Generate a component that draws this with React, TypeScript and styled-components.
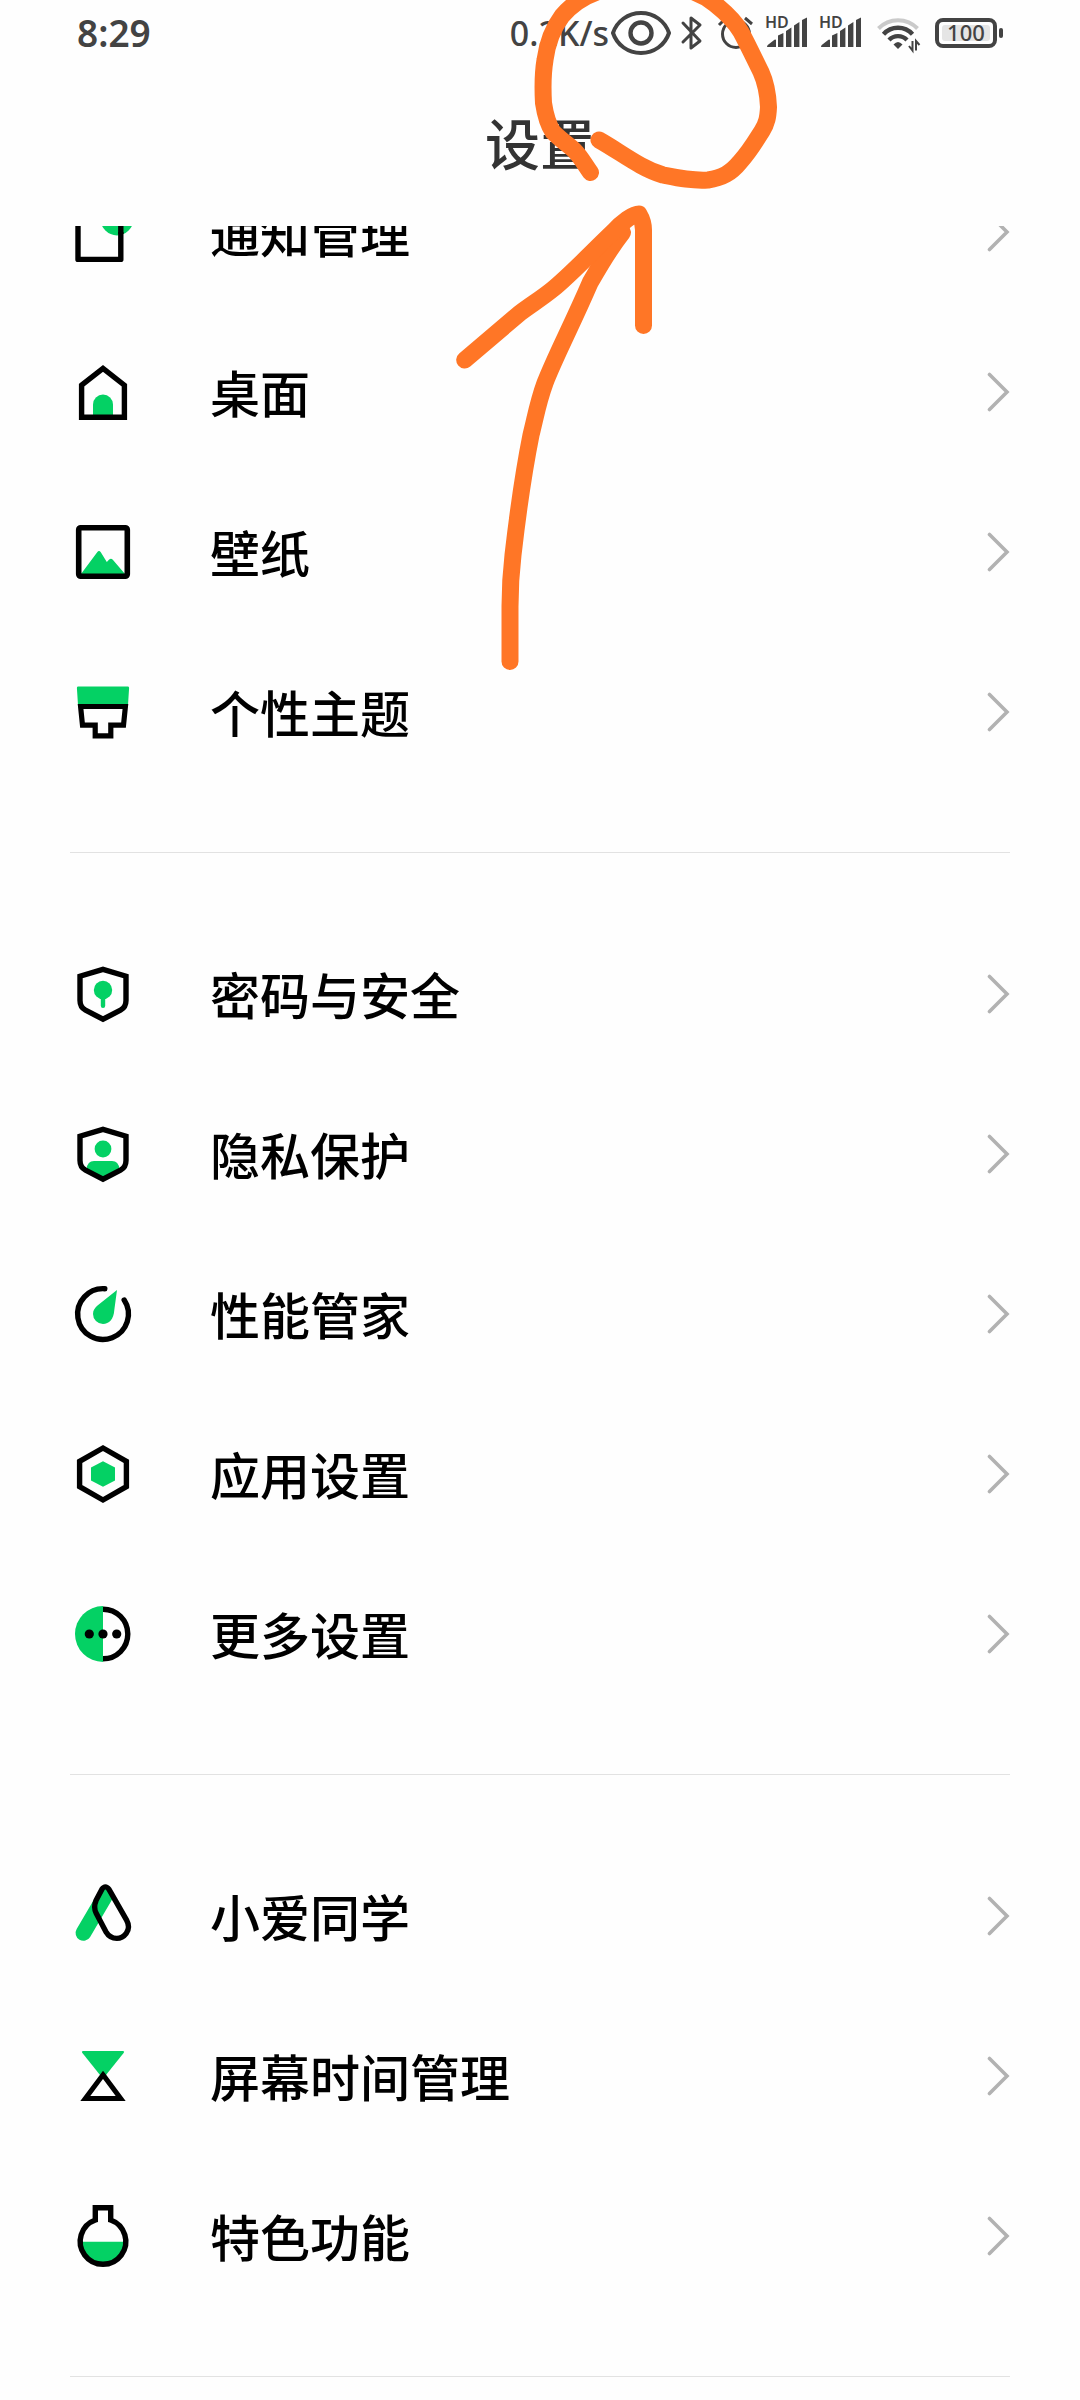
import React from "react";
import styled, { createGlobalStyle } from "styled-components";

const GREEN = "#04d164";
const INK = "#434343";

const GlobalStyle = createGlobalStyle`
  *, *::before, *::after { box-sizing: border-box; }
  body {
    margin: 0;
    background: #fefefe;
    font-family: "Noto Sans", "Noto Sans CJK SC", sans-serif;
  }
`;

const Screen = styled.div`
  position: relative;
  display: flex;
  flex-direction: column;
  min-height: 100vh;
  overflow: hidden;
`;

const StatusBar = styled.header`
  display: flex;
  align-items: center;
  justify-content: space-between;
  height: 66px;
  padding: 0 77px;
  color: ${INK};
`;

const Clock = styled.time`
  font-size: 37px;
  font-weight: 600;
  line-height: 48px;
`;

const StatusGroup = styled.div<{ $gap: number }>`
  display: flex;
  align-items: center;
  gap: ${(p) => p.$gap}px;
`;

const Speed = styled.span`
  font-size: 34px;
  font-weight: 500;
  line-height: 48px;
`;

const StatusGlyph = styled.svg`
  display: block;
  flex: none;
  height: 60px;
  fill: none;
  stroke: ${INK};
`;

const TitleBar = styled.div`
  display: flex;
  align-items: center;
  justify-content: center;
  height: 160px;
  padding-bottom: 10px;
`;

const Title = styled.h1`
  margin: 0;
  color: #333;
  font-family: "Noto Sans CJK SC", sans-serif;
  font-size: 55px;
  font-weight: 500;
  line-height: 80px;
`;

const Viewport = styled.main`
  flex: 1;
  overflow: hidden;
`;

/* The list is scrolled so that its first row is partly under the title bar. */
const Scrolled = styled.nav`
  margin: -74px 70px 0;
`;

const Group = styled.ul`
  margin: 0;
  padding: 0 0 60px;
  list-style: none;
  border-bottom: 1px solid #e2e2e2;

  & + & {
    padding-top: 61px;
  }
`;

const Row = styled.a`
  display: flex;
  align-items: center;
  height: 160px;
  color: #000;
  text-decoration: none;
`;

const RowIcon = styled.svg`
  display: block;
  flex: none;
  width: 66px;
  height: 66px;
  margin-right: 74px;
  fill: none;
  stroke-width: 5.4;
`;

const Label = styled.span`
  flex: 1;
  padding-bottom: 2px;
  font-family: "Noto Sans CJK SC", sans-serif;
  font-size: 50px;
  font-weight: 500;
  line-height: 72px;
`;

const Chevron = styled.svg`
  display: block;
  flex: none;
  width: 24px;
  height: 40px;
  fill: none;
  stroke: #b2b2b2;
  stroke-width: 3.6;
  stroke-linecap: round;
`;

const Annotation = styled.svg`
  position: absolute;
  top: 0;
  left: 50%;
  width: 400px;
  height: 700px;
  margin-left: -100px;
  overflow: visible;
  pointer-events: none;
  fill: none;
  stroke: #ff7626;
  stroke-width: 17;
  stroke-linecap: round;
  stroke-linejoin: round;
`;

const shield =
  "M0 -24.6L23 -17.8V6.5C23 11.5 21.5 14 17.5 16.2L0 25.2L-17.5 16.2C-21.5 14 -23 11.5 -23 6.5V-17.8Z";

const icons: Record<string, React.ReactNode> = {
  notifications: (
    <>
      <circle cx="14" cy="-13" r="16.4" fill={GREEN} />
      <path d="M-2 -21H-25V27.4H17.8V0" stroke="#000" strokeLinejoin="round" />
      <path d="M17.8 2V-10" stroke="#000" />
    </>
  ),
  home: (
    <>
      <path d="M-10 24V12.5A10 10 0 0 1 10 12.5V24Z" fill={GREEN} />
      <path d="M-21.4 -6.8L0 -23.6L21.4 -6.8V25.3H-21.4Z" stroke="#000" />
    </>
  ),
  wallpaper: (
    <>
      <path d="M-22 22L-5.8 0.2Q-4 -2.2 -2.2 0.2L3.8 9.9L6.2 7.6Q8 6 9.8 7.8L22 22Z" fill={GREEN} />
      <rect x="-24.3" y="-24.3" width="48.6" height="48.6" rx="2" stroke="#000" strokeWidth="5.6" />
    </>
  ),
  theme: (
    <>
      <path d="M-24.6 -25.4H24.6Q26.2 -25.4 26.1 -24L25 -7H-25L-26.1 -24Q-26.2 -25.4 -24.6 -25.4Z" fill={GREEN} />
      <path d="M-22.4 -5.5H22.4L20.5 13.2H7.8V23.8H-7.8V13.2H-20.5Z" stroke="#000" strokeWidth="5.2" />
    </>
  ),
  security: (
    <>
      <circle cy="-4" r="9.2" fill={GREEN} />
      <path d="M0 0V11.8" stroke={GREEN} strokeWidth="4.4" strokeLinecap="round" />
      <path d={shield} stroke="#000" />
    </>
  ),
  privacy: (
    <>
      <circle cy="-5" r="8.4" fill={GREEN} />
      <path d="M-9 7H9Q15.6 7 16.4 15L0 24L-16.4 15Q-15.6 7 -9 7Z" fill={GREEN} />
      <path d={shield} stroke="#000" />
    </>
  ),
  performance: (
    <>
      <path d="M14 -24L11.3 -4C10.8 5 6 10 0 10A10 10 0 0 1 -10 0C-10 -4 -8 -6 -5.5 -8.5Z" fill={GREEN} />
      <path d="M1.8 -25.3A25.4 25.4 0 1 0 21.2 -14" stroke="#000" strokeLinecap="round" />
    </>
  ),
  apps: (
    <>
      <path d="M0 -12.8L12 -6.4V6.4L0 12.8L-12 6.4V-6.4Z" fill={GREEN} />
      <path d="M0 -26L23.4 -12.6V12.6L0 26L-23.4 12.6V-12.6Z" stroke="#000" />
    </>
  ),
  more: (
    <>
      <path d="M0 -28A28 28 0 0 0 0 28Z" fill={GREEN} />
      <path d="M0 -24.8A24.8 24.8 0 0 1 0 24.8" stroke="#000" />
      <circle cx="-13.7" r="4.6" fill="#000" />
      <circle r="4.6" fill="#000" />
      <circle cx="13.7" r="4.6" fill="#000" />
    </>
  ),
  assistant: (
    <>
      <path d="M-19.6 17L2.4 -20.5" stroke={GREEN} strokeWidth="15.6" strokeLinecap="round" />
      <path
        d="M-1.2 -26.6Q2.4 -31.6 6 -26.6L23.6 4.2C29.5 15 20 22.4 13.8 22.4C8.6 22.4 5.2 19.6 2.8 15.6L-6.8 -2.8Q-9.8 -8.6 -7 -15.4Z"
        stroke="#000"
        strokeLinejoin="round"
      />
    </>
  ),
  screenTime: (
    <>
      <path d="M-19.6 -25H19.6Q22 -25 20.6 -23L3 -1H-3L-20.6 -23Q-22 -25 -19.6 -25Z" fill={GREEN} />
      <path d="M0 -1.2L17.7 22.4H-17.7Z" stroke="#000" strokeWidth="5" fill="#fefefe" />
    </>
  ),
  special: (
    <>
      <path d="M-21 5.7H21A21 21 0 0 1 -21 5.7Z" fill={GREEN} />
      <path d="M-7.7 -16V-28.3H7.7V-16A22.8 22.8 0 1 1 -7.7 -16Z" stroke="#000" />
    </>
  ),
};

const groups = [
  [
    { icon: "notifications", label: "通知管理" },
    { icon: "home", label: "桌面" },
    { icon: "wallpaper", label: "壁纸" },
    { icon: "theme", label: "个性主题" },
  ],
  [
    { icon: "security", label: "密码与安全" },
    { icon: "privacy", label: "隐私保护" },
    { icon: "performance", label: "性能管家" },
    { icon: "apps", label: "应用设置" },
    { icon: "more", label: "更多设置" },
  ],
  [
    { icon: "assistant", label: "小爱同学" },
    { icon: "screenTime", label: "屏幕时间管理" },
    { icon: "special", label: "特色功能" },
  ],
];

function Signal() {
  return (
    <StatusGlyph width="42" viewBox="0 0 42 60" aria-label="HD" role="img">
      <text x="0" y="25" fontSize="16" fontWeight="600" fill={INK} stroke="none">
        HD
      </text>
      <path
        d="M2 44Q2 42 4 41L9.5 36.8Q11 36 11 37.5V44ZM13 32.5L18.4 30V44H13ZM21 28L26.4 24.6V44H21ZM29 22.5L34.4 19V44H29ZM37 17L42 14.4V44H37Z"
        fill={INK}
        stroke="none"
      />
    </StatusGlyph>
  );
}

function StatusIcons() {
  return (
    <StatusGroup $gap={12}>
      <StatusGroup $gap={0}>
        <Speed>0.2K/s</Speed>
        <StatusGlyph width="62" viewBox="-31 -30 62 60" strokeWidth="4">
          <path d="M-27 0C-23 -12 -12 -20 1 -20C14 -20 25 -12 29 0C25 12 14 20 1 20C-12 20 -23 12 -27 0Z" />
          <circle cx="1" r="10.5" strokeWidth="4.4" />
        </StatusGlyph>
        <StatusGlyph width="34" viewBox="0 0 34 60" strokeWidth="3">
          <path d="M12 20L29 38L20 45V15L29 22L12 39" strokeLinecap="round" strokeLinejoin="round" />
        </StatusGlyph>
      </StatusGroup>
      <StatusGlyph width="36" viewBox="0 0 36 60" strokeWidth="3">
        <circle cx="19" cy="31" r="13.5" />
        <path d="M19 23V31H24M2 22L9 15M28 15L35 21" />
      </StatusGlyph>
      <Signal />
      <Signal />
      <StatusGlyph width="50" viewBox="0 0 50 60" strokeWidth="4">
        <path d="M5.5 25.5A27 27 0 0 1 44.5 25.5" stroke="#cacaca" />
        <path d="M10.5 31.2A19.5 19.5 0 0 1 39.5 31.2M16 37A12.5 12.5 0 0 1 34 37" strokeWidth="4.4" />
        <path d="M25 46L20.5 41.5Q25 36.5 29.5 41.5Z" fill={INK} stroke="none" />
        <path d="M39.5 38V47.5L36 43M43 47.5V38L46.5 42" strokeWidth="2" />
      </StatusGlyph>
      <StatusGlyph width="68" viewBox="0 0 68 60">
        <rect x="2" y="17" width="58" height="26" rx="6" strokeWidth="4" />
        <rect x="7" y="22" width="48" height="16" rx="3" fill="#e5e5e5" stroke="none" />
        <rect x="64" y="25" width="4" height="10" rx="2" fill={INK} stroke="none" />
        <text x="31" y="38" textAnchor="middle" fontSize="22" fontWeight="500" fill={INK} stroke="none">
          100
        </text>
      </StatusGlyph>
    </StatusGroup>
  );
}

export default function App() {
  return (
    <Screen>
      <GlobalStyle />
      <StatusBar>
        <Clock>8:29</Clock>
        <StatusIcons />
      </StatusBar>
      <TitleBar>
        <Title>设置</Title>
      </TitleBar>
      <Viewport>
        <Scrolled>
          {groups.map((rows, i) => (
            <Group key={i}>
              {rows.map((row) => (
                <li key={row.icon}>
                  <Row href={`#${row.icon}`}>
                    <RowIcon viewBox="-33 -33 66 66" aria-hidden="true">
                      {icons[row.icon]}
                    </RowIcon>
                    <Label>{row.label}</Label>
                    <Chevron viewBox="0 0 24 40" aria-hidden="true">
                      <path d="M3.5 2.5L21 20L3.5 37.5" />
                    </Chevron>
                  </Row>
                </li>
              ))}
            </Group>
          ))}
        </Scrolled>
      </Viewport>
      <Annotation viewBox="440 0 400 700" aria-hidden="true">
        <path d="M590.5 172.5C585 165 581 157 574 150C567 144 560 139 553 132C547 123 545 113 543.5 103C542.5 85 543 72 545 60C547 45 553 28 562 16C574 2 590 -8 612 -12H680C695 -9 705 -4 715 4C725 12 735 21 741 32C748 45 755 60 761 72C766 83 768 95 768.5 107C768 117 767 123 762 131C755 142 750 151 740 162C731 173 722 178 708 180C692 181 678 178 663 175C640 168 622 153 599 140" />
        <path d="M510 661.5V606.5C510 585 511 572 513 555C517 520 524 470 531 435C536 415 538 402 545 383C555 357 571 327 590 283C598 269 608 251 622.5 232.5" />
        <path d="M464.7 360L520 313C532 304 542 298 553 289C568 277 590 254 613 232C622 222 633 214 639 214C642 219 643.5 224 643.5 230V325.5" />
      </Annotation>
    </Screen>
  );
}
